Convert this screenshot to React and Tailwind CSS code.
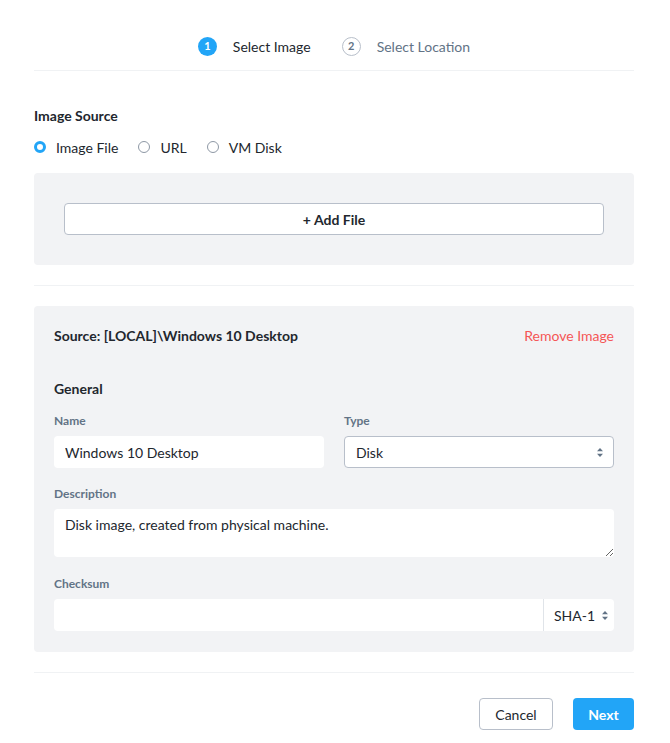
import { useState } from 'react';

const Arrows = () => (
  <svg className="w-[6px] h-[9px] text-[#627386]" viewBox="0 0 6 9" fill="currentColor">
    <path d="M3 0 6 3.2H0Z" />
    <path d="M3 9 0 5.8h6Z" />
  </svg>
);

const Radio = ({ label, checked, onClick }) => (
  <button type="button" onClick={onClick} className="flex items-center gap-[10px]">
    {checked ? (
      <span className="w-[12px] h-[12px] rounded-full border-[3.5px] border-[#22a5f7] bg-white" />
    ) : (
      <span className="w-[12px] h-[12px] rounded-full border border-[#8e98a5] bg-white" />
    )}
    <span className="text-[14px] text-[#22272e]">{label}</span>
  </button>
);

const Label = ({ children }) => (
  <div className="text-[12px] font-bold text-[#627386] mb-[7px] leading-[16px]">{children}</div>
);

export default function App() {
  const [source, setSource] = useState('file');
  const [name, setName] = useState('Windows 10 Desktop');
  const [desc, setDesc] = useState('Disk image, created from physical machine.');

  return (
    <div className="w-[670px] min-h-[743px] bg-white font-['Lato',sans-serif] text-[#22272e]">
      <div className="w-[600px] ml-[34px]">
        {/* Stepper */}
        <div className="flex justify-center items-center gap-[31px] h-[71px] pt-[22px] border-b border-[#f0f2f4]">
          <div className="flex items-center gap-[16px]">
            <span className="w-[19px] h-[19px] rounded-full bg-[#22a5f7] text-white text-[11px] font-bold flex items-center justify-center">1</span>
            <span className="text-[14px] text-[#22272e]">Select Image</span>
          </div>
          <div className="flex items-center gap-[16px]">
            <span className="w-[19px] h-[19px] rounded-full border border-[#b8bfca] text-[#627386] text-[11px] font-bold flex items-center justify-center">2</span>
            <span className="text-[14px] text-[#627386]">Select Location</span>
          </div>
        </div>

        {/* Image source */}
        <div className="pt-[36px]">
          <div className="text-[14px] font-bold leading-[18px]">Image Source</div>
          <div className="flex items-center gap-[20px] mt-[13px] h-[18px]">
            <Radio label="Image File" checked={source === 'file'} onClick={() => setSource('file')} />
            <Radio label="URL" checked={source === 'url'} onClick={() => setSource('url')} />
            <Radio label="VM Disk" checked={source === 'disk'} onClick={() => setSource('disk')} />
          </div>
        </div>

        <div className="mt-[17px] bg-[#f2f3f5] rounded-[4px] px-[30px] py-[30px]">
          <button type="button" className="w-full h-[32px] bg-white border border-[#b8bfca] rounded-[4px] text-[14px] font-bold flex items-center justify-center">
            + Add File
          </button>
        </div>

        <div className="mt-[20px] border-t border-[#f0f2f4]" />

        {/* Selected image */}
        <div className="mt-[20px] bg-[#f2f3f5] rounded-[4px] px-[20px] pt-[20px] pb-[21px]">
          <div className="flex justify-between items-center h-[18px]">
            <span className="text-[14px] font-bold">Source: [LOCAL]\Windows 10 Desktop</span>
            <button type="button" className="text-[14px] text-[#f55656]">Remove Image</button>
          </div>

          <div className="mt-[36px] text-[14px] font-bold leading-[18px]">General</div>

          <div className="mt-[15px] grid grid-cols-2 gap-x-[20px]">
            <div>
              <Label>Name</Label>
              <input
                value={name}
                onChange={(e) => setName(e.target.value)}
                className="w-full h-[32px] bg-white rounded-[4px] px-[11px] text-[14px] outline-none"
              />
            </div>
            <div>
              <Label>Type</Label>
              <div className="h-[32px] bg-white border border-[#b8bfca] rounded-[4px] pl-[11px] pr-[10px] flex items-center justify-between text-[14px]">
                <span>Disk</span>
                <Arrows />
              </div>
            </div>
          </div>

          <div className="mt-[18px]">
            <Label>Description</Label>
            <textarea
              value={desc}
              onChange={(e) => setDesc(e.target.value)}
              className="block w-full h-[48px] bg-white rounded-[4px] px-[11px] pt-[5px] text-[14px] outline-none resize-y"
            />
          </div>

          <div className="mt-[19px]">
            <Label>Checksum</Label>
            <div className="flex h-[32px] bg-white rounded-[4px]">
              <input className="flex-1 min-w-0 bg-transparent px-[11px] text-[14px] outline-none" />
              <div className="w-[71px] border-l border-[#e0e4e9] flex items-center gap-[7px] pl-[10px] text-[14px]">
                <span>SHA-1</span>
                <Arrows />
              </div>
            </div>
          </div>
        </div>

        <div className="mt-[20px] border-t border-[#f0f2f4]" />

        {/* Footer */}
        <div className="flex justify-end gap-[20px] pt-[25px]">
          <button type="button" className="w-[74px] h-[32px] border border-[#b8bfca] rounded-[4px] text-[14px] bg-white">
            Cancel
          </button>
          <button type="button" className="w-[61px] h-[32px] rounded-[4px] bg-[#22a5f7] text-white text-[14px] font-bold">
            Next
          </button>
        </div>
      </div>
    </div>
  );
}
